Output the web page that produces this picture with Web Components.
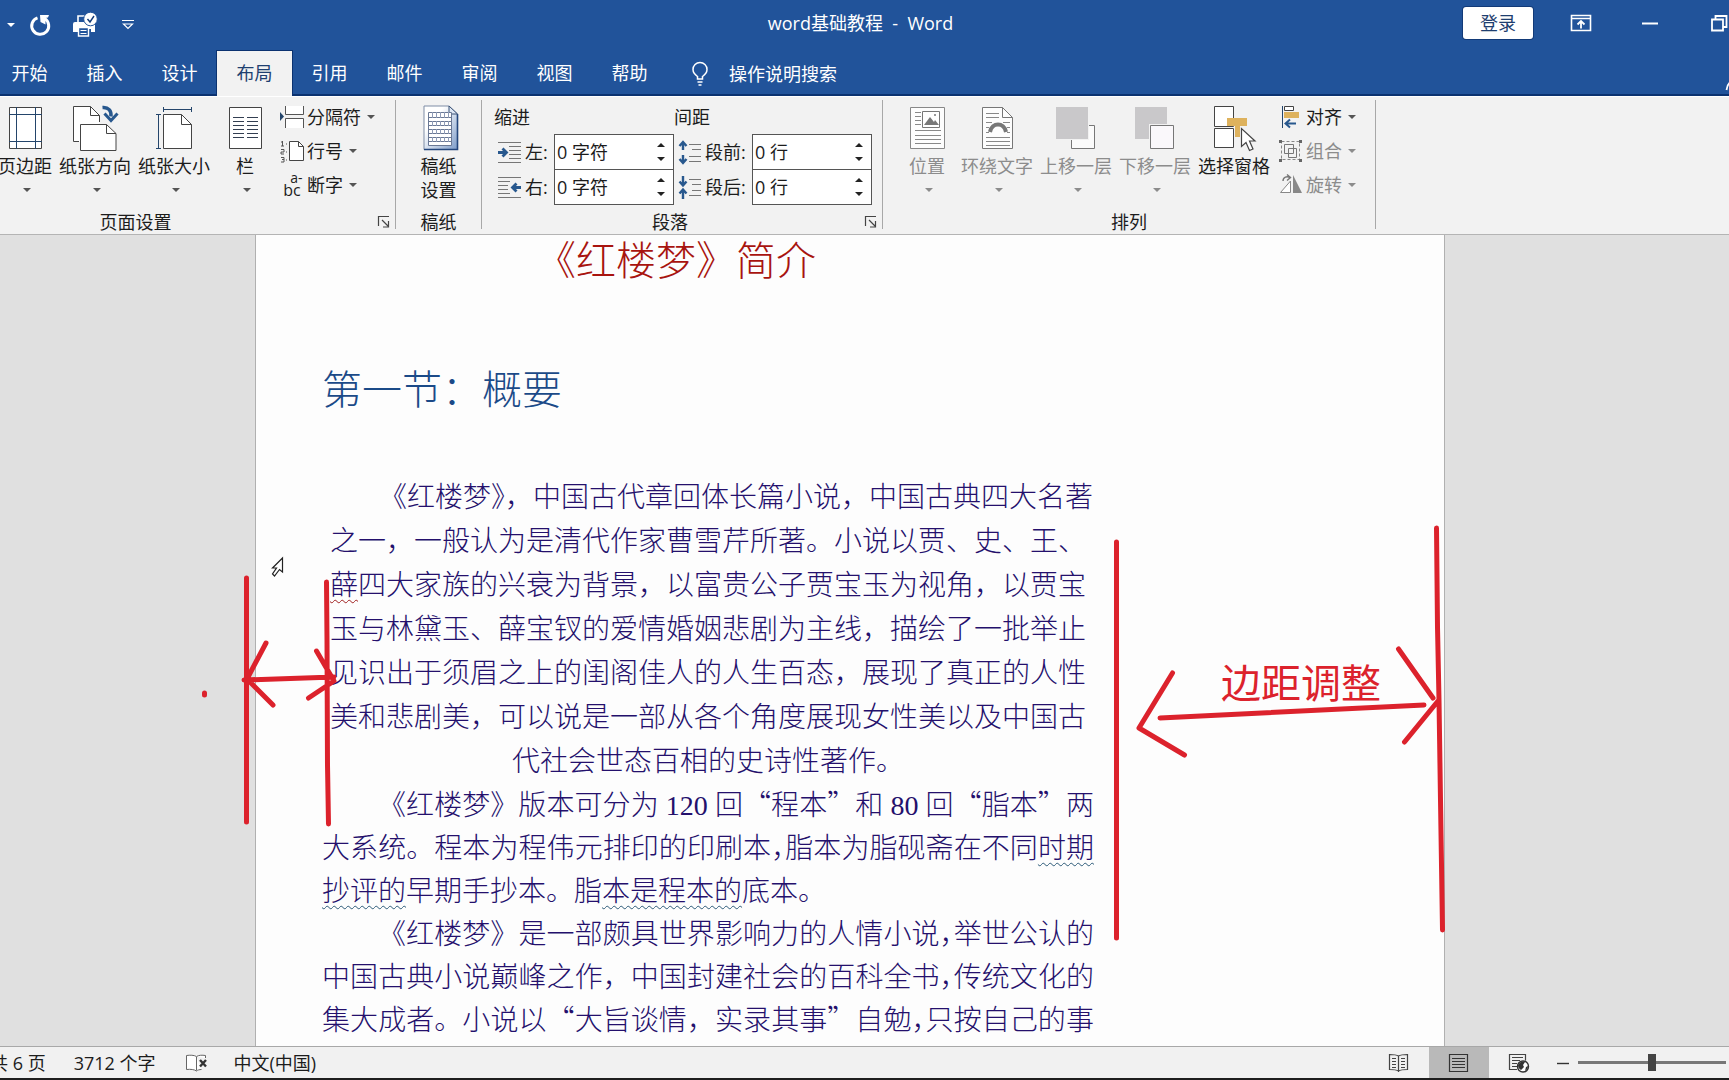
<!DOCTYPE html>
<html lang="zh-CN">
<head>
<meta charset="utf-8">
<title>word基础教程 - Word</title>
<style>
html,body{margin:0;height:100%;overflow:hidden}
body{font:18px/24px "Open Sans","Noto Sans CJK SC",sans-serif;color:#1c1c1c;background:#e0e0e0}
</style>
</head>
<body>
<word-app></word-app>
<script>
const ICONS = {
 caret:[8,4,'<path d="M0 0h8L4 4z" fill="currentColor"/>'],
 redo:[24,24,'<path d="M9.500 4.800A8.500 8.500 0 1 0 16.500 5.500" fill="none" stroke="#fff" stroke-width="3"/><path d="M12 2h9l-1 2.500-2.500.5v6.500L12.500 9z" fill="#fff"/>'],
 print:[26,26,'<path d="M1 12q0-2 2-2h18q2 0 2 2v8h-4v-3H6v3H1z" fill="#fff"/><path d="M6 10V4h9v6" fill="none" stroke="#fff" stroke-width="1.600"/><path d="M6.500 15.500h10v8.500h-10z" fill="#21539a" stroke="#fff" stroke-width="1.400"/><path d="M8.500 18.500h6M8.500 21.500h6" stroke="#fff"/><circle cx="18.500" cy="7" r="6.800" fill="#fff" stroke="#21539a"/><path d="M15.500 7l2.500 3 4-6" fill="none" stroke="#123a78" stroke-width="1.400"/>'],
 more:[12,12,'<path d="M0 1.500h12M1.500 5h9L6 9.500z" fill="none" stroke="#fff" stroke-width="1.200"/>'],
 display:[22,18,'<path d="M1.500 1.500h19v15h-19zM1.500 4.500h19" fill="none" stroke="#fff" stroke-width="1.600"/><path d="M11 14.500V8M7.500 10.500L11 7l3.500 3.500" fill="none" stroke="#fff" stroke-width="1.800"/>'],
 minus:[18,18,'<path d="M1 9.500h16" stroke="#fff" stroke-width="2"/>'],
 restore:[18,18,'<path d="M2 5.500h11v11H2zM5.500 5V2h11v11h-3" fill="none" stroke="#fff" stroke-width="1.800"/>'],
 bulb:[18,26,'<path d="M6.500 18v-2.500C3 13 2 11 2 8.500a7 7 0 0 1 14 0c0 2.500-1 4.500-4.500 7V18zM6.500 21h5M7.500 24h3" fill="none" stroke="#fff" stroke-width="1.500"/>'],
 person:[24,24,'<circle cx="11" cy="7" r="5.500" fill="none" stroke="#fff" stroke-width="1.800"/><path d="M1.500 23c1-7 5-9.500 9.500-9.500s8.500 2.500 9.500 9.500" fill="none" stroke="#fff" stroke-width="1.800"/>'],
 margins:[48,46,'<path d="M8.500 2.500h32v41h-32z" fill="#fff" stroke="#444"/><path d="M15.500 2v42M34.500 2v42M8 9.500h33M8 36.500h33" stroke="#24456b" fill="none"/>'],
 orient:[48,46,'<path d="M2.500 1.500h17l9 9v26h-26z" fill="#fff"/><path d="M8 36.500H2.500v-35h17l9 9V17M19.500 1.500v9h9" fill="none" stroke="#444"/><path d="M9.500 19.500h26l9.500 9v17H9.500z" fill="#fff" stroke="#444"/><path d="M35.500 19.500v9H45" fill="none" stroke="#444"/><path d="M31.500 2.500c6-.5 9 3 8.500 9" fill="none" stroke="#28588e" stroke-width="3.500"/><path d="M33.500 8.500l6.500 7 6.500-7" fill="none" stroke="#28588e" stroke-width="3"/>'],
 size:[48,46,'<path d="M13.500 9.500h18l10 10v24h-28z" fill="#fff" stroke="#444"/><path d="M31.500 9.500v10h10" fill="none" stroke="#444"/><path d="M13 4.500h29M13.500 2v5M41.500 2v5M8.500 9v35M6 9.500h5M6 43.500h5" stroke="#24456b"/>'],
 columns:[48,46,'<path d="M8.500 2.500h32v41h-32z" fill="#fff" stroke="#444"/><path d="M12 12.500h11M12 16.500h11M12 20.500h11M12 24.500h11M12 28.500h11M12 32.500h11M26 12.500h11M26 16.500h11M26 20.500h11M26 24.500h11M26 28.500h11M26 32.500h11" stroke="#333f52"/>'],
 grid:[48,46,'<defs><linearGradient id="g" x1="0" y1="0" x2="1" y2="1"><stop offset=".3" stop-color="#fff"/><stop offset="1" stop-color="#7d9cc9"/></linearGradient></defs><path d="M9 1h25l8.500 8v35.500H9z" fill="url(#g)" stroke="#7e8da6"/><path d="M9 44.500h33.500V9" fill="none" stroke="#24467c" stroke-width="1.600"/><path d="M34 1v8h8.500z" fill="#dfe8f5" stroke="#3a5276"/><path d="M13.500 7.500h23v33h-23zM13.500 12.500h23M13.500 16.500h23M13.500 20.500h23M13.500 24.500h23M13.500 28.500h23M13.500 32.500h23M13.500 36.500h23" fill="#fff" stroke="#6a7894"/><path d="M17.500 7v6M21.500 7v6M25.500 7v6M29.500 7v6M33.500 7v6M17.500 16v5M21.500 16v5M25.500 16v5M29.500 16v5M33.500 16v5M17.500 24v5M21.500 24v5M25.500 24v5M29.500 24v5M33.500 24v5M17.500 32v5M21.500 32v5M25.500 32v5M29.500 32v5M33.500 32v5" stroke="#8f9bb6"/>'],
 position:[48,46,'<path d="M7.500 2.500h34v41h-34z" fill="#fdfdfd" stroke="#888"/><path d="M12 7.500h6M12 11.500h6M12 15.500h6M12 19.500h6M12 25.500h26M12 30.500h26M12 34.500h26M12 38.500h26" stroke="#888"/><path d="M19.500 6.500h17v16h-17z" fill="#fff" stroke="#777"/><path d="M21 20l6-8 4 5 1-2 4 5z" fill="#777"/><path d="M31 9h2v2h-2z" fill="#999"/>'],
 wrap:[48,46,'<path d="M9.500 2.500h20l10 10v31h-30z" fill="#fdfdfd" stroke="#777"/><path d="M29.500 2.500v10h10" fill="none" stroke="#777"/><path d="M13 8.500h13M13 12.500h13M13 17.500h6M30 17.500h7M13 22.500h3M34 22.500h3M13 27.500h3M34 27.500h3M13 32.500h24M13 36.500h24M13 40.500h24" stroke="#888"/><path d="M17 27c2-10 14-10 16 0" fill="none" stroke="#777" stroke-width="4"/>'],
 front:[48,46,'<path d="M19.500 20.500h23v23h-23z" fill="#fbfbfb" stroke="#777"/><path d="M3 1h34v34H3z" fill="#f2f2f2"/><path d="M4 2h32v32H4z" fill="#c9c8ca"/>'],
 back:[48,46,'<path d="M4 2h32v32H4z" fill="#c9c8ca"/><path d="M18 19h26v26H18z" fill="#f2f2f2"/><path d="M19.500 20.500h23v23h-23z" fill="#faf8fb" stroke="#777"/>'],
 pane:[48,46,'<path d="M4.500 1.500h19v20h-19zM4.500 23.500h19v19h-19z" fill="#fff" stroke="#444"/><path d="M17 13h20v8h-7v11h-5V21h-8z" fill="#deb25d"/><path d="M31.500 23.500v18l4.500-4 3.500 8 3.500-1.500-3.500-8h5.500z" fill="#fff" stroke="#444" stroke-width="1.200"/>'],
 breaks:[24,24,'<path d="M5.500 1v8.500h18V1M5.500 23v-9.500h18V23" fill="#fff" stroke="#555"/><path d="M0 7l4 4.500L0 16z" fill="#24456b"/>'],
 lines:[24,24,'<path d="M9.500 2.500h9l5 5v14h-14z" fill="#fff" stroke="#444"/><path d="M18.500 2.500v5h5" fill="none" stroke="#444"/><path d="M2.500 2v5M1 7h3M1 3h1.500M1 10.500h3v2.500H1v2h3M1 18.500h3V23H1M2 20.500h2M6 5h1M6 13h1M6 21h1" fill="none" stroke="#555"/>'],
 align:[24,24,'<path d="M3.500 1v22" stroke="#24456b"/><path d="M5.500 1.500h9v4h-9z" fill="#fff" stroke="#444"/><path d="M5 7h15v6H5z" fill="#deb25d"/><path d="M17 18.500H7M11 14.500l-4.500 4 4.500 4" fill="none" stroke="#28588e" stroke-width="2"/>'],
 group:[24,24,'<path d="M2.500 2.500h18v18h-18z" fill="none" stroke="#888" stroke-dasharray="3 2"/><path d="M5.500 5.500h9v9h-9zM9.500 9.500h8v9h-8z" fill="none" stroke="#777"/><path d="M0 1h3v3H0zM20 1h3v3h-3zM0 20h3v3H0zM20 20h3v3h-3z" fill="#666"/>'],
 rotate:[24,24,'<path d="M1.500 19.500L11.500 8v11.500z" fill="#fff" stroke="#888"/><path d="M14 2v18h9z" fill="#888"/><path d="M4 8c0-4 4-5 7-3.500M8 1.500l3.500 3-3.500 3" fill="none" stroke="#777" stroke-width="1.400"/>'],
 indentL:[24,24,'<path d="M0 2.500h23M11 6.500h12M11 10.500h12M11 14.500h12M11 18.500h12M0 22.500h23" stroke="#777"/><path d="M0 12.500h8M4.500 8.500l4 4-4 4" fill="none" stroke="#28588e" stroke-width="2.800"/>'],
 indentR:[24,24,'<path d="M0 2.500h23M0 6.500h12M0 10.500h10M0 14.500h10M0 18.500h12M0 22.500h23" stroke="#777"/><path d="M23 12.500h-8M18.500 8.500l-4 4 4 4" fill="none" stroke="#28588e" stroke-width="2.800"/>'],
 before:[24,24,'<path d="M11 4.500h12M14 9.500h9M11 16.500h12M11 21.500h12" stroke="#777"/><path d="M5 10V2.500M1.500 6L5 2l3.500 4M5 15v7.500M1.500 19L5 23l3.500-4" fill="none" stroke="#28588e" stroke-width="2.400"/>'],
 after:[24,24,'<path d="M11 4.500h12M14 9.500h9M14 15.500h9M11 20.500h12" stroke="#777"/><path d="M5 1v8M1.500 6.500l3.500 4 3.500-4M5 24v-8M1.500 18.500l3.500-4 3.500 4" fill="none" stroke="#28588e" stroke-width="2.400"/>'],
 launch:[12,12,'<path d="M.5 10V.5H11M4 4l6 6M10.500 5v6H5" fill="none" stroke="#444" stroke-width="1.200"/>'],
 proof:[22,18,'<path d="M10.500 2.500C8 1 4 1 .5 1.500v14c4-.5 8 0 10 1.500 1-1 3-1.500 5-1.500M10.500 3v13.500M10.500 2.500C13 1 16 1 19.500 1.500V4" fill="#fff" stroke="#666"/><path d="M14 6l6 6.500M20 6l-6 6.500" stroke="#333" stroke-width="2.400"/>'],
 read:[20,20,'<path d="M9.500 3C7 1.500 4 1.500.5 1.500v15c3.500 0 6.500 0 9 1.500 2.500-1.500 5.500-1.500 9-1.500v-15c-3.500 0-6.500 0-9 1.500zM9.500 3v16M3 5.500h4M3 8.500h4M3 11.500h4M3 14.500h4M12 5.500h4M12 8.500h4M12 11.500h4M12 14.500h4" fill="none" stroke="#444" stroke-width="1.200"/>'],
 layout:[20,20,'<path d="M.5 1.500h18v17H.5zM3 5.500h13M3 8.500h13M3 11.500h13M3 14.500h13" fill="none" stroke="#333" stroke-width="1.200"/>'],
 web:[21,20,'<path d="M8 16.500H.5v-15h16v6M3 4.500h11M3 7.500h8M3 10.500h5M3 13.500h5" fill="none" stroke="#444" stroke-width="1.200"/><circle cx="14" cy="13.500" r="5.500" fill="#fff" stroke="#333" stroke-width="1.400"/><path d="M9 12c2-4 6-4 7-3l-2 3 1 2-3 3c-2-1-3-3-3-5zM17 14l2-1c0 2-1 4-3 5z" fill="#333"/>'],
 out:[14,14,'<path d="M1 7.500h12" stroke="#333" stroke-width="1.400"/>']
};
function define(name, html, after){
  const tpl=document.createElement('template'); tpl.innerHTML=html;
  customElements.define(name, class extends HTMLElement{
    constructor(){super(); this.attachShadow({mode:'open'});}
    connectedCallback(){
      if(this.shadowRoot.childNodes.length) return;
      this.shadowRoot.append(tpl.content.cloneNode(true));
      if(after) after(this,this.shadowRoot);
    }
  });
}
define('ui-icon','<style>:host{display:block;flex:none}svg{display:block;overflow:visible}b{font:400 14px/10px "Open Sans",sans-serif;display:block;height:10px;padding-left:9px}b+b{padding-left:0;font-size:16px;line-height:14px}:host([name=hyphen]){width:24px;height:24px}</style>',(el,r)=>{
  const n=el.getAttribute('name');
  if(n==='hyphen'){r.innerHTML+='<b>a-</b><b>bc</b>';return;}
  const [w,h,d]=ICONS[n];
  r.innerHTML+=`<svg width="${w}" height="${h}" viewBox="0 0 ${w} ${h}" aria-hidden="true">${d}</svg>`;
});
function iconFor(el,r){
  const i=document.createElement('ui-icon');
  i.setAttribute('name',el.getAttribute('icon'));
  r.querySelector('[data-icon]').replaceWith(i);
}
define('title-bar',`<style>
:host{display:grid;grid-template-columns:1fr auto 1fr;align-items:center;height:46px;color:#fff;overflow:hidden;padding-right:8px}
button{all:unset;box-sizing:border-box;display:flex;justify-content:center;align-items:center}
.q{display:flex;align-items:center;padding:3px 0 0 7px}.q button:nth-child(2){margin-left:13px}.q button:nth-child(3){margin-left:20px}.q button:nth-child(4){margin-left:24px}
.t{white-space:pre}.w{display:flex;justify-self:end;align-items:center;margin-right:-32px}.w button{width:69px;height:40px}
.w .s{width:70px;height:32px;background:#fff;color:#1f3f70;border-radius:3px;margin-right:13px;box-shadow:0 0 0 1px #123a78}
</style><div class="q"><button aria-label="撤消选项"><ui-icon name="caret"></ui-icon></button><button aria-label="重复"><ui-icon name="redo"></ui-icon></button><button aria-label="快速打印"><ui-icon name="print"></ui-icon></button><button aria-label="自定义"><ui-icon name="more"></ui-icon></button></div>
<span class="t">word基础教程  -  Word</span>
<div class="w"><button class="s">登录</button><button aria-label="功能区显示选项"><ui-icon name="display"></ui-icon></button><button aria-label="最小化"><ui-icon name="minus"></ui-icon></button><button aria-label="还原"><ui-icon name="restore"></ui-icon></button></div>`);
define('tab-strip',`<style>
:host{display:flex;height:50px;color:#fff;box-sizing:border-box;padding-top:5px;margin-left:-8px;overflow:hidden;box-shadow:inset 0 -2px #0b3270}
button{all:unset;box-sizing:border-box}
nav{display:flex}nav button{width:75px;text-align:center;line-height:45px}
nav button.on{background:#f2f2f2;color:#1f3f70;box-shadow:0 0 0 1px #0b3270}
.h{display:flex;align-items:center;gap:20px;margin-left:24px;height:45px}
.p{margin-left:auto;margin-right:-20px;padding-top:11px}
</style><nav><button>开始</button><button>插入</button><button>设计</button><button class="on">布局</button><button>引用</button><button>邮件</button><button>审阅</button><button>视图</button><button>帮助</button></nav><button class="h"><ui-icon name="bulb"></ui-icon>操作说明搜索</button><button class="p" aria-label="共享"><ui-icon name="person"></ui-icon></button>`);
define('ribbon-button',`<style>
:host{display:block}:host([off]){color:#8c8c8c}
button{all:unset;display:flex;flex-direction:column;align-items:center;white-space:nowrap;text-align:center}
.l{padding-top:3px}.c{margin:10px 0 0 4px;color:#555}:host([off]) .c{color:#8c8c8c}:host([plain]) .c{display:none}
:host([small]) button{flex-direction:row;height:34px}:host([small]) .l{padding:0 0 0 3px}:host([small]) .c{margin:0 0 0 6px}
</style><button><span data-icon></span><span class="l"><slot></slot></span><ui-icon class="c" name="caret"></ui-icon></button>`,iconFor);
define('ribbon-group',`<style>
:host{display:flex;flex-direction:column;box-sizing:border-box;border-right:1px solid #a8a8a8;margin:3px 0 5px;flex:none}
.b{display:flex;flex:1;align-items:flex-start}
footer{display:grid;grid-template-columns:var(--lead,1fr) auto 1fr;height:14px;line-height:14px}
footer span{grid-column:2}button{all:unset;justify-self:end;margin:1px 5px 0 0;display:flex}:host(:not([dialog])) button{display:none}
</style><div class="b"><slot></slot></div><footer><span></span><button aria-label="对话框"><ui-icon name="launch"></ui-icon></button></footer>`,(el,r)=>{r.querySelector('span').textContent=el.getAttribute('name')});
define('spin-field',`<style>
:host{display:flex;align-items:center;height:35px;padding-left:4px}
label{flex:1;padding-left:3px;white-space:nowrap}
.f{display:flex;box-sizing:border-box;width:120px;height:36px;border:1px solid #555;background:#fff;margin-bottom:-1px}
input{all:unset;flex:1;min-width:0;padding-left:2px}
.a{display:flex;flex-direction:column;justify-content:center;gap:10px;padding-right:8px}
button{all:unset;display:flex;color:#222}button:first-child{transform:rotate(180deg)}
</style><span data-icon></span><label for="i"></label><div class="f"><input id="i"><div class="a"><button aria-label="增加"><ui-icon name="caret"></ui-icon></button><button aria-label="减少"><ui-icon name="caret"></ui-icon></button></div></div>`,(el,r)=>{
  iconFor(el,r);
  r.querySelector('label').textContent=el.getAttribute('label');r.querySelector('input').value=el.getAttribute('value');
});
define('layout-ribbon',`<style>
:host{display:flex;height:139px;box-sizing:border-box;background:#f2f2f2;border-top:1px solid #fff;border-bottom:1px solid #b4b4b4;overflow:hidden}
ribbon-button:not([small]){padding-top:5px}
.r{display:flex;gap:7px}
.setup{width:520px;margin-left:-124px}.setup .r{padding-left:122px}.setup .col{margin:0 11px}
.paper{width:86px}.paper ribbon-button{margin:0 auto}
.para{width:401px;--lead:170px}.c1{width:180px;padding-left:12px}.c2{width:198px}.h{line-height:34px}
.arr{width:493px}.arr .r{padding-left:26px}.arr .p{width:36px;display:flex;justify-content:center;margin-right:9px}.arr .k{padding-left:9px}
</style>
<ribbon-group class="setup" name="页面设置" dialog><div class="r"><ribbon-button icon="margins">页边距</ribbon-button><ribbon-button icon="orient">纸张方向</ribbon-button><ribbon-button icon="size">纸张大小</ribbon-button></div><ribbon-button class="col" icon="columns">栏</ribbon-button><div class="k"><ribbon-button small icon="breaks">分隔符</ribbon-button><ribbon-button small icon="lines">行号</ribbon-button><ribbon-button small icon="hyphen">断字</ribbon-button></div></ribbon-group>
<ribbon-group class="paper" name="稿纸"><ribbon-button icon="grid" plain>稿纸<br>设置</ribbon-button></ribbon-group>
<ribbon-group class="para" name="段落" dialog><div class="c1"><div class="h">缩进</div><spin-field icon="indentL" label="左:" value="0 字符"></spin-field><spin-field icon="indentR" label="右:" value="0 字符"></spin-field></div><div class="c2"><div class="h">间距</div><spin-field icon="before" label="段前:" value="0 行"></spin-field><spin-field icon="after" label="段后:" value="0 行"></spin-field></div></ribbon-group>
<ribbon-group class="arr" name="排列"><div class="r"><ribbon-button class="p" icon="position" off>位置</ribbon-button><ribbon-button icon="wrap" off>环绕文字</ribbon-button><ribbon-button icon="front" off>上移一层</ribbon-button><ribbon-button icon="back" off>下移一层</ribbon-button><ribbon-button icon="pane" plain>选择窗格</ribbon-button></div><div class="k"><ribbon-button small icon="align">对齐</ribbon-button><ribbon-button small icon="group" off>组合</ribbon-button><ribbon-button small icon="rotate" off>旋转</ribbon-button></div></ribbon-group>`);
define('pen-marks',`<style>:host{display:block;position:absolute;left:0;top:0;pointer-events:none}svg{display:block;overflow:visible}text{font:40px "Noto Sans CJK SC",sans-serif;fill:#dc222c}</style>
<svg width="1190" height="811" viewBox="256 235 1190 811"><g fill="none" stroke="#dc222c" stroke-width="5" stroke-linecap="round" stroke-linejoin="round">
<path d="M246.500 578V822M326.500 582L327 640L327.500 765L328.500 824M266 643L247 679L273 705M244 680L334 677M316.500 651L334 681L308.500 698M204.500 693v2"/>
<path d="M1116.500 542V938M1436.500 528L1437.500 627L1439 700L1440.500 800L1442.500 930M1172.500 673L1139 728L1184.500 755M1160 718L1424 705M1398.500 649L1433 698M1438 701L1404.500 742"/></g>
<text x="1221" y="698">边距调整</text>
<path d="M282.500 558v14l-3-2.500-5 6.500-2-2 4-6h-4z" fill="#fff" stroke="#222" stroke-width="1.200"/></svg>`);
define('doc-page',`<style>
:host{display:block;position:relative;flex:none;box-sizing:border-box;width:1190px;min-height:100%;background:#fdfdfd;border:solid #b0b0b0;border-width:0 1px;padding:0 350px 0 66px;font-family:"Liberation Serif","Noto Sans CJK SC",serif;font-weight:300;color:#24106c}
h1,h2{font-size:40px;font-weight:300;margin:0}
h1{line-height:54px;color:#a8140f;text-align:center;padding-right:64px}h2{line-height:60px;color:#1b4a88;margin:72px 0 55px}
p{margin:0;font-size:28px;line-height:43px;text-indent:56px;white-space:nowrap}
.c{text-align:center;line-height:44px}.j{text-align-last:justify}.n{text-indent:0}
i{font-style:normal;font-feature-settings:"halt"}q{quotes:none;font-family:"Noto Sans CJK SC",sans-serif;line-height:0}
u{text-decoration:underline wavy #2c5a78 1px;text-underline-offset:4px}u.r{text-decoration-color:#a02020}
</style><h1>《红楼梦》简介</h1><h2>第一节：概要</h2>
<p class="c">《红楼梦》，中国古代章回体长篇小说，中国古典四大名著<br>之一，一般认为是清代作家曹雪芹所著。小说以贾、史、王、<br><u class="r">薛</u>四大家族的兴衰为背景，以富贵公子贾宝玉为视角，以贾宝<br>玉与林黛玉、薛宝钗的爱情婚姻悲剧为主线，描绘了一批举止<br>见识出于须眉之上的闺阁佳人的人生百态，展现了真正的人性<br>美和悲剧美，可以说是一部从各个角度展现女性美以及中国古<br>代社会世态百相的史诗性著作。</p>
<p class="j">《红楼梦》版本可分为 120 回<q>“</q>程本<q>”</q>和 80 回<q>“</q>脂本<q>”</q>两<br>大系统。程本为程伟元排印的印刷本<i>，</i>脂本为脂砚斋在不同<u>时期</u></p>
<p class="n"><u>抄评的</u>早期手抄本。脂<u>本是程本的</u>底本。</p>
<p class="j">《红楼梦》是一部颇具世界影响力的人情小说<i>，</i>举世公认的<br>中国古典小说巅峰之作，中国封建社会的百科全书<i>，</i>传统文化的<br>集大成者。小说以<q>“</q>大旨谈情，实录其事<q>”</q>自勉<i>，</i>只按自己的事</p>
<pen-marks></pen-marks>`);
define('status-bar',`<style>
:host{display:flex;align-items:center;background:#f1f1f1;border-top:1px solid #a8a8a8;border-bottom:2px solid #1e1e1e;height:31px;overflow:hidden}
span{white-space:nowrap}.a{margin-left:-10px}.b{margin:0 30px 0 28px}.c{margin-left:26px}
button{all:unset;display:flex;width:60px;height:31px;align-items:center;justify-content:center}.on{background:#b9b9b9}
.v{display:flex;margin-left:auto}.o{width:14px;margin:0 8px 0 7px}
input{appearance:none;width:148px;height:3px;background:#777;margin:0 3px 0 0}
input::-webkit-slider-thumb{appearance:none;width:8px;height:17px;background:#444}
</style><span class="a">共 6 页</span><span class="b">3712 个字</span><ui-icon name="proof"></ui-icon><span class="c">中文(中国)</span>
<div class="v"><button aria-label="阅读视图"><ui-icon name="read"></ui-icon></button><button class="on" aria-label="页面视图"><ui-icon name="layout"></ui-icon></button><button aria-label="Web 版式"><ui-icon name="web"></ui-icon></button></div><button class="o" aria-label="缩小"><ui-icon name="out"></ui-icon></button><input type="range" min="0" max="100" value="50" aria-label="缩放">`);
define('word-app',`<style>
:host{display:flex;flex-direction:column;height:100vh;overflow:hidden}
header{background:#21539a;flex:none}
main{flex:1;min-height:0;overflow:hidden;display:flex;justify-content:center;background:#e0e0e0;padding-right:29px}
</style><header><title-bar></title-bar><tab-strip></tab-strip></header><layout-ribbon></layout-ribbon><main><doc-page></doc-page></main><status-bar></status-bar>`);
</script>
</body>
</html>
